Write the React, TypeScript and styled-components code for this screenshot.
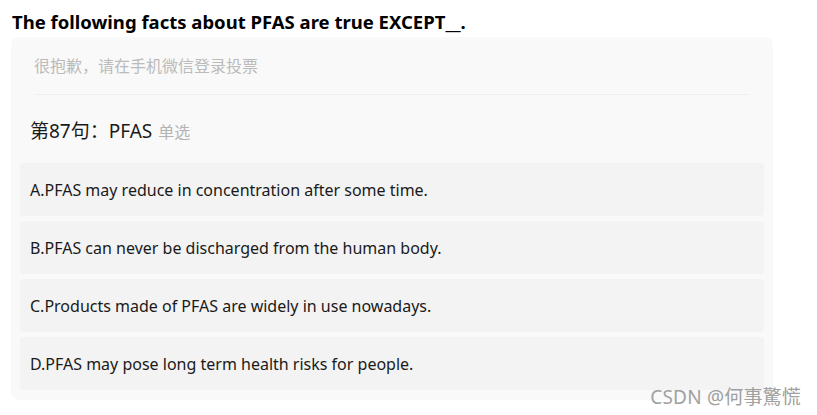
import styled, { createGlobalStyle } from "styled-components";

const GlobalStyle = createGlobalStyle`
  body {
    margin: 0;
    background: #ffffff;
    font-family: "Noto Sans", "Noto Sans CJK SC", sans-serif;
  }
`;

const options = [
  "A.PFAS may reduce in concentration after some time.",
  "B.PFAS can never be discharged from the human body.",
  "C.Products made of PFAS are widely in use nowadays.",
  "D.PFAS may pose long term health risks for people.",
];

const Page = styled.div`
  position: relative;
  width: 817px;
  height: 415px;
  padding: 9px 0 0 11px;
  box-sizing: border-box;
`;

const Title = styled.h2`
  margin: 0 0 3px 1px;
  font-size: 18.5px;
  line-height: 25px;
  font-weight: 700;
  color: #000;
`;

const Card = styled.div`
  width: 762px;
  box-sizing: border-box;
  background: #f9f9f9;
  border-radius: 8px;
  padding: 0 9px 10px;
`;

const Hint = styled.div`
  margin: 0 14px;
  padding: 18px 0 16px;
  border-bottom: 1px solid #efefef;
  font-size: 16px;
  line-height: 23px;
  color: #bbbbbb;
`;

const Question = styled.div`
  display: flex;
  align-items: baseline;
  gap: 6px;
  padding: 23px 10px 19px;
  color: #1a1a1a;
`;

const QText = styled.span`
  font-size: 19px;
  line-height: 26px;
`;

const Tag = styled.span`
  font-size: 16px;
  color: #b3b3b3;
`;

const Options = styled.div`
  display: flex;
  flex-direction: column;
  gap: 5px;
`;

const Option = styled.div`
  display: flex;
  align-items: center;
  height: 53px;
  padding: 0 10px;
  background: #f3f3f3;
  border-radius: 4px;
  font-size: 16px;
  color: #1a1a1a;
`;

const Watermark = styled.div`
  position: absolute;
  right: 16px;
  bottom: 5px;
  font-size: 19px;
  color: #a0a0a0;
  letter-spacing: 0.2px;
`;

export default function App() {
  return (
    <>
      <GlobalStyle />
      <Page>
        <Title>The following facts about PFAS are true EXCEPT__.</Title>
        <Card>
          <Hint>很抱歉，请在手机微信登录投票</Hint>
          <Question>
            <QText>第87句：PFAS</QText>
            <Tag>单选</Tag>
          </Question>
          <Options>
            {options.map((o) => (
              <Option key={o}>{o}</Option>
            ))}
          </Options>
        </Card>
        <Watermark>CSDN @何事驚慌</Watermark>
      </Page>
    </>
  );
}
